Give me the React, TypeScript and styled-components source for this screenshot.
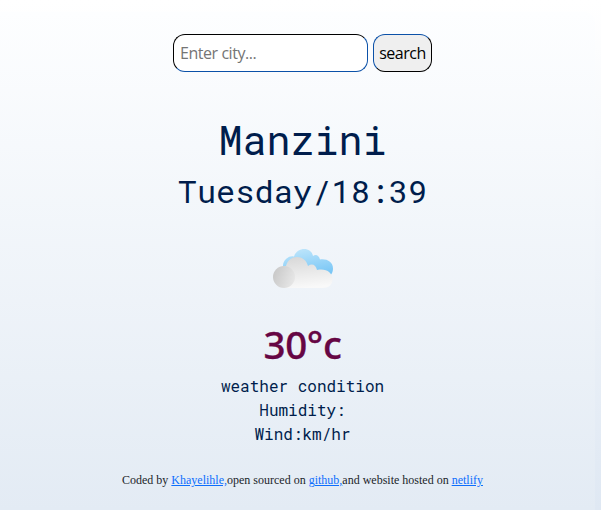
import React from "react";
import styled, { createGlobalStyle } from "styled-components";

const GlobalStyle = createGlobalStyle`
  *, *::before, *::after { box-sizing: border-box; }
  html { height: 100%; }
  body {
    margin: 0;
    height: 100%;
    overflow: hidden;
    background: linear-gradient(to top, #dfe8f3 0%, #ffffff 100%);
  }
  #root { height: 100%; display: flow-root; }
`;

const Card = styled.main`
  display: flex;
  flex-direction: column;
  align-items: center;
  width: 595px;
  height: 498px;
  margin-top: 12px;
  padding: 22px 0 0 10px;
  border-radius: 0 10px 0 0;
  background: linear-gradient(to top, #e3ebf4 0%, #fdfeff 100%);
  color: #001d4c;
`;

const SearchForm = styled.form`
  display: flex;
  gap: 5px;
  height: 38px;
`;

const CityInput = styled.input`
  width: 195px;
  padding: 0 6px;
  border: 1px solid;
  border-color: #000 #0b51a8 #0b51a8 #000;
  border-radius: 12px;
  background: #fff;
  font: 16px "Segoe UI", "Open Sans", sans-serif;
  letter-spacing: -0.45px;
  outline: none;
  &::placeholder { color: #757575; opacity: 1; }
`;

const SearchButton = styled.button`
  width: 59px;
  padding: 0;
  border: 1px solid;
  border-color: #0b51a8 #000 #000 #0b51a8;
  border-radius: 12px;
  background: #efefef;
  color: #000;
  font: 16px "Segoe UI", "Open Sans", sans-serif;
  letter-spacing: -0.5px;
`;

const City = styled.h1`
  margin: 44px 0 0;
  font: 400 40px/48px "Roboto Mono", "Liberation Mono", monospace;
`;

const DateTime = styled.h2`
  margin: 8px 0 0;
  font: 400 32px/38px "Roboto Mono", "Liberation Mono", monospace;
`;

const CloudIcon = styled.svg`
  display: block;
  width: 60px;
  height: 40px;
  margin-top: 39px;
`;

const Temperature = styled.div`
  margin-top: 31px;
  font: 500 38.5px/48px "Segoe UI", "Noto Sans", sans-serif;
  letter-spacing: -0.4px;
  color: #660644;
  -webkit-text-stroke: 0.3px currentColor;
`;

const Conditions = styled.ul`
  margin: 6px 0 0;
  padding: 0;
  list-style: none;
  text-align: center;
  font: 16px/24px "Roboto Mono", "Liberation Mono", monospace;
`;

const Credits = styled.footer`
  margin-top: 25px;
  font: 12px/18px "Liberation Serif", serif;
  color: #212529;
  white-space: nowrap;
`;

const CreditLink = styled.a`
  color: #0d6efd;
  text-decoration: underline;
`;

function Cloud() {
  return (
    <CloudIcon viewBox="0 0 60 40" aria-hidden="true">
      <defs>
        <linearGradient id="sky" x1="0.3" y1="0" x2="0.6" y2="1">
          <stop offset="0" stopColor="#bde5fb" />
          <stop offset="1" stopColor="#74c4f5" />
        </linearGradient>
        <linearGradient id="front" x1="0.3" y1="0" x2="0.5" y2="1">
          <stop offset="0" stopColor="#d8d8d8" />
          <stop offset="0.6" stopColor="#ececec" />
          <stop offset="1" stopColor="#f9f9f9" />
        </linearGradient>
        <linearGradient id="puff" x1="0" y1="0.3" x2="1" y2="0.7">
          <stop offset="0" stopColor="#c8c8c8" />
          <stop offset="1" stopColor="#e8e8e8" />
        </linearGradient>
      </defs>
      <path fill="url(#sky)" d="M10 17a9.500 9.500 0 0 1 11-9.500C24-2 38-2.500 40 7c3-2 6-.500 7 3.500 7-1 13 2.500 13 9 0 5-3 9-9 9H20z" />
      <path fill="url(#front)" d="M11 39C-2 36-1 17 13 17 16 5 32 5 35 17c4-3 8-1 9 4 9-2 15.500 2.500 15.500 9.500 0 5-4 8.500-9.500 8.500z" />
      <circle cx="11" cy="28" r="11" fill="url(#puff)" />
    </CloudIcon>
  );
}

export default function App() {
  return (
    <>
      <GlobalStyle />
      <Card>
        <SearchForm onSubmit={(event) => event.preventDefault()}>
          <CityInput type="text" placeholder="Enter city..." />
          <SearchButton type="submit">search</SearchButton>
        </SearchForm>
        <City>Manzini</City>
        <DateTime>Tuesday/18:39</DateTime>
        <Cloud />
        <Temperature>30°c</Temperature>
        <Conditions>
          <li>weather condition</li>
          <li>Humidity:</li>
          <li>Wind:km/hr</li>
        </Conditions>
        <Credits>
          Coded by <CreditLink href="#">Khayelihle,</CreditLink>open sourced on{" "}
          <CreditLink href="#">github,</CreditLink>and website hosted on{" "}
          <CreditLink href="#">netlify</CreditLink>
        </Credits>
      </Card>
    </>
  );
}
